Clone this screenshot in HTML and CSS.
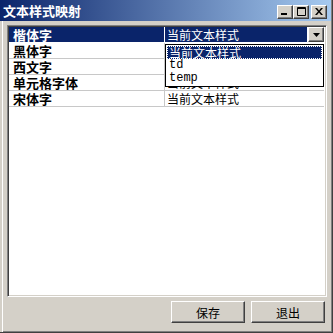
FILE: index.html
```html
<!DOCTYPE html>
<html lang="zh-CN">
<head>
    <meta charset="UTF-8">
    <title>文本样式映射</title>
    <link rel="stylesheet" href="styles.css">
</head>
<body>
    <div class="window">
        <div class="titlebar">
            <span class="title">文本样式映射</span>
            <div class="caption-buttons">
                <div class="cbtn">
                    <svg width="8" height="7" viewBox="0 0 8 7"><rect x="0" y="5" width="6" height="2" fill="#000"/></svg>
                </div>
                <div class="cbtn">
                    <svg width="9" height="9" viewBox="0 0 9 9"><path d="M0.5 0.5h8v8h-8z M0.5 1.5h8" fill="none" stroke="#000"/></svg>
                </div>
                <div class="cbtn close">
                    <svg width="8" height="7" viewBox="0 0 8 7"><path d="M0 0h2l2 2.5 2-2.5h2l-3 3.5 3 3.5h-2l-2-2.5-2 2.5h-2l3-3.5z" fill="#000"/></svg>
                </div>
            </div>
        </div>
        <div class="client">
            <div class="grid-box">
                <div class="row selected">
                    <div class="cell name">楷体字</div>
                    <div class="cell value combo">
                        <span class="combo-text">当前文本样式</span>
                        <span class="combo-btn">
                            <svg width="7" height="4" viewBox="0 0 7 4"><path d="M0 0h7l-3.5 4z" fill="#000"/></svg>
                        </span>
                    </div>
                </div>
                <div class="row">
                    <div class="cell name">黑体字</div>
                    <div class="cell value">当前文本样式</div>
                </div>
                <div class="row">
                    <div class="cell name">西文字</div>
                    <div class="cell value">当前文本样式</div>
                </div>
                <div class="row">
                    <div class="cell name">单元格字体</div>
                    <div class="cell value">当前文本样式</div>
                </div>
                <div class="row">
                    <div class="cell name">宋体字</div>
                    <div class="cell value">当前文本样式</div>
                </div>
                <ul class="dropdown">
                    <li class="current">当前文本样式</li>
                    <li class="mono">td</li>
                    <li class="mono">temp</li>
                </ul>
            </div>
            <div class="footer">
                <button class="btn">保存</button>
                <button class="btn">退出</button>
            </div>
        </div>
    </div>
</body>
</html>
```

FILE: styles.css
```css
body {
    margin: 0;
    background-color: #d4d0c8;
    font-family: "Noto Sans CJK SC", "Liberation Sans", sans-serif;
    font-size: 12px;
}
.window {
    width: 333px;
    height: 333px;
    box-sizing: border-box;
    display: flex;
    flex-direction: column;
    background-color: #d4d0c8;
    border-right: 1px solid #404040;
    border-bottom: 1px solid #404040;
    box-shadow: inset 2px 0 #d4d0c8, inset 3px 0 #fff, inset -1px -1px #808080;
}
.titlebar {
    height: 21px;
    margin-right: 1px;
    display: flex;
    align-items: center;
    justify-content: space-between;
    padding: 0 4px 0 3px;
    background: linear-gradient(to right, #0a246a, #a6caf0);
}
.title {
    color: #fff;
    font-weight: bold;
    font-size: 13px;
    line-height: 14px;
}
.caption-buttons {
    display: flex;
    margin-top: 2px;
}
.cbtn {
    width: 16px;
    height: 14px;
    box-sizing: border-box;
    display: flex;
    align-items: center;
    justify-content: center;
    background-color: #d4d0c8;
    border-top: 1px solid #fff;
    border-left: 1px solid #fff;
    border-right: 1px solid #404040;
    border-bottom: 1px solid #404040;
    box-shadow: inset -1px -1px #808080;
}
.cbtn.close {
    margin-left: 2px;
}
.client {
    flex: 1;
    display: flex;
    flex-direction: column;
    padding: 4px 5px 0 7px;
}
.grid-box {
    position: relative;
    height: 272px;
    box-sizing: border-box;
    background-color: #fff;
    border-top: 1px solid #808080;
    border-left: 1px solid #808080;
    border-right: 1px solid #fff;
    border-bottom: 1px solid #fff;
    box-shadow: inset 1px 1px #404040, inset -1px -1px #d4d0c8;
    padding: 1px 2px 0 1px;
}
.row {
    display: flex;
    height: 16px;
    box-sizing: border-box;
    border-bottom: 1px solid #c8c8c8;
}
.cell {
    line-height: 15px;
    white-space: nowrap;
}
.name {
    width: 156px;
    box-sizing: border-box;
    padding-left: 4px;
    font-weight: bold;
    font-size: 13px;
    color: #000;
    border-right: 1px solid #c8c8c8;
}
.value {
    flex: 1;
    padding-left: 2px;
    color: #000;
}
.row.selected {
    border-bottom-color: #fff;
}
.row.selected .name {
    background-color: #0a246a;
    color: #fff;
    border-right-color: #fff;
}
.combo {
    display: flex;
    padding-left: 0;
}
.combo-text {
    flex: 1;
    background-color: #0a246a;
    color: #fff;
    padding-left: 2px;
    margin-right: 1px;
}
.combo-btn {
    width: 16px;
    height: 15px;
    box-sizing: border-box;
    display: flex;
    align-items: center;
    justify-content: center;
    background-color: #d4d0c8;
    border-top: 1px solid #fff;
    border-left: 1px solid #fff;
    border-right: 1px solid #404040;
    border-bottom: 1px solid #404040;
    box-shadow: inset -1px -1px #808080;
}
.dropdown {
    position: absolute;
    left: 157px;
    top: 18px;
    width: 159px;
    box-sizing: border-box;
    margin: 0;
    padding: 1px;
    list-style: none;
    background-color: #fff;
    border: 1px solid #000;
}
.dropdown li {
    height: 13px;
    line-height: 13px;
    padding-left: 2px;
    color: #000;
}
.dropdown li.current {
    background-color: #0a246a;
    color: #fff;
    outline: 1px dotted #fff;
    outline-offset: -1px;
}
.dropdown li.mono {
    font-family: "Liberation Mono", monospace;
    font-size: 12px;
}
.footer {
    display: flex;
    justify-content: flex-end;
    gap: 6px;
    margin-top: 4px;
    padding-right: 2px;
}
.btn {
    width: 74px;
    height: 22px;
    padding: 0;
    font-family: "Noto Sans CJK SC", sans-serif;
    font-size: 12px;
    color: #000;
    background-color: #d4d0c8;
    border-top: 1px solid #fff;
    border-left: 1px solid #fff;
    border-right: 1px solid #404040;
    border-bottom: 1px solid #404040;
    box-shadow: inset -1px -1px #808080;
}
```
